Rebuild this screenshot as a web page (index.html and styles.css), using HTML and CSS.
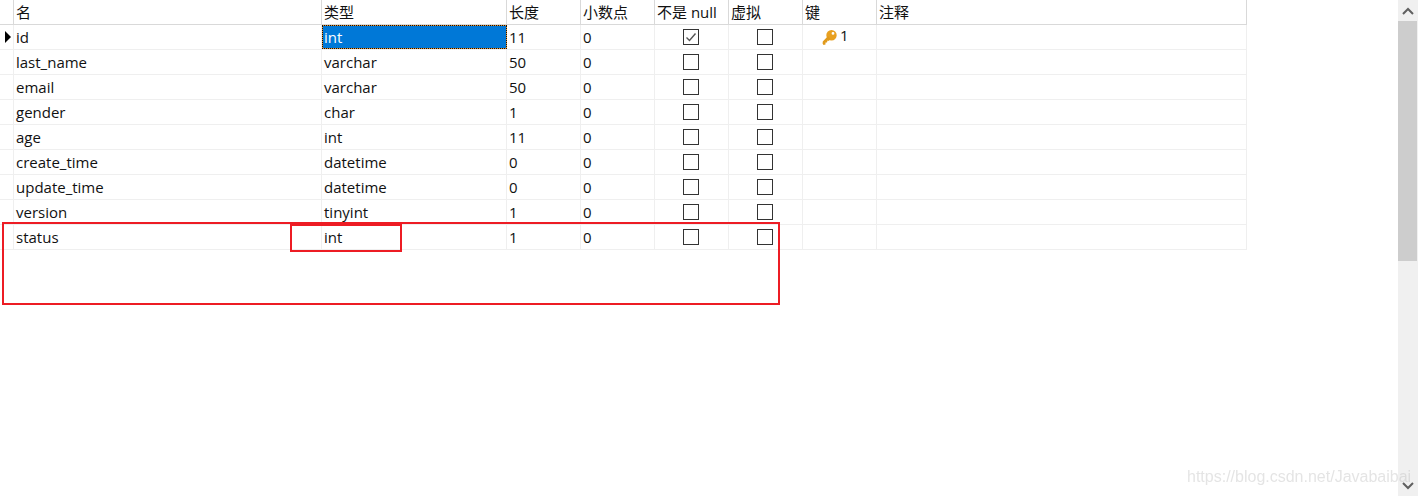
FILE: index.html
```html
<!DOCTYPE html>
<html lang="en">
<head>
    <meta charset="UTF-8">
    <meta name="viewport" content="width=device-width, initial-scale=1.0">
    <title>Fields</title>
    <link rel="stylesheet" href="styles.css">
</head>
<body>
    <div class="grid">
        <div class="row head">
            <div class="cell"></div>
            <div class="cell">名</div>
            <div class="cell">类型</div>
            <div class="cell">长度</div>
            <div class="cell">小数点</div>
            <div class="cell">不是 null</div>
            <div class="cell">虚拟</div>
            <div class="cell">键</div>
            <div class="cell">注释</div>
        </div>

        <div class="row">
            <div class="cell"><span class="marker"></span></div>
            <div class="cell">id</div>
            <div class="cell selected">int</div>
            <div class="cell">11</div>
            <div class="cell">0</div>
            <div class="cell center"><span class="check">
                <svg width="14" height="14" viewBox="0 0 14 14"><path d="M2.5 7.5 L5.5 10.5 L11.5 3.5" fill="none" stroke="#555" stroke-width="1.4"/></svg>
            </span></div>
            <div class="cell center"><span class="check"></span></div>
            <div class="cell key">
                <svg width="16" height="17" viewBox="0 0 16 17">
                    <path d="M9.5 1 a5.2 5.2 0 1 1 0 10.4 a5.2 5.2 0 1 1 0 -10.4 Z M11 3 a1.4 1.4 0 1 0 0 2.8 a1.4 1.4 0 1 0 0 -2.8 Z" fill="#e8a020" fill-rule="evenodd"/>
                    <path d="M6 7 L8.5 10 L6.5 12 L5.5 11.5 L5 13.5 L3.5 13.5 L3.5 15.5 L1.5 16 L0.6 14.6 L0.8 12.4 Z" fill="#e09a1c"/>
                </svg>
                <span class="key-num">1</span>
            </div>
            <div class="cell"></div>
        </div>

        <div class="row">
            <div class="cell"></div>
            <div class="cell">last_name</div>
            <div class="cell">varchar</div>
            <div class="cell">50</div>
            <div class="cell">0</div>
            <div class="cell center"><span class="check"></span></div>
            <div class="cell center"><span class="check"></span></div>
            <div class="cell"></div>
            <div class="cell"></div>
        </div>

        <div class="row">
            <div class="cell"></div>
            <div class="cell">email</div>
            <div class="cell">varchar</div>
            <div class="cell">50</div>
            <div class="cell">0</div>
            <div class="cell center"><span class="check"></span></div>
            <div class="cell center"><span class="check"></span></div>
            <div class="cell"></div>
            <div class="cell"></div>
        </div>

        <div class="row">
            <div class="cell"></div>
            <div class="cell">gender</div>
            <div class="cell">char</div>
            <div class="cell">1</div>
            <div class="cell">0</div>
            <div class="cell center"><span class="check"></span></div>
            <div class="cell center"><span class="check"></span></div>
            <div class="cell"></div>
            <div class="cell"></div>
        </div>

        <div class="row">
            <div class="cell"></div>
            <div class="cell">age</div>
            <div class="cell">int</div>
            <div class="cell">11</div>
            <div class="cell">0</div>
            <div class="cell center"><span class="check"></span></div>
            <div class="cell center"><span class="check"></span></div>
            <div class="cell"></div>
            <div class="cell"></div>
        </div>

        <div class="row">
            <div class="cell"></div>
            <div class="cell">create_time</div>
            <div class="cell">datetime</div>
            <div class="cell">0</div>
            <div class="cell">0</div>
            <div class="cell center"><span class="check"></span></div>
            <div class="cell center"><span class="check"></span></div>
            <div class="cell"></div>
            <div class="cell"></div>
        </div>

        <div class="row">
            <div class="cell"></div>
            <div class="cell">update_time</div>
            <div class="cell">datetime</div>
            <div class="cell">0</div>
            <div class="cell">0</div>
            <div class="cell center"><span class="check"></span></div>
            <div class="cell center"><span class="check"></span></div>
            <div class="cell"></div>
            <div class="cell"></div>
        </div>

        <div class="row">
            <div class="cell"></div>
            <div class="cell">version</div>
            <div class="cell">tinyint</div>
            <div class="cell">1</div>
            <div class="cell">0</div>
            <div class="cell center"><span class="check"></span></div>
            <div class="cell center"><span class="check"></span></div>
            <div class="cell"></div>
            <div class="cell"></div>
        </div>

        <div class="row">
            <div class="cell"></div>
            <div class="cell">status</div>
            <div class="cell">int</div>
            <div class="cell">1</div>
            <div class="cell">0</div>
            <div class="cell center"><span class="check"></span></div>
            <div class="cell center"><span class="check"></span></div>
            <div class="cell"></div>
            <div class="cell"></div>
        </div>
    </div>

    <div class="scrollbar">
        <div class="arrow">
            <svg width="12" height="8" viewBox="0 0 12 8"><path d="M1 7 L6 2 L11 7" fill="none" stroke="#606060" stroke-width="2"/></svg>
        </div>
        <div class="thumb"></div>
        <div class="arrow down">
            <svg width="12" height="8" viewBox="0 0 12 8"><path d="M1 1 L6 6 L11 1" fill="none" stroke="#606060" stroke-width="2"/></svg>
        </div>
    </div>

    <!-- red marks drawn over the screenshot -->
    <div class="mark mark-row"></div>
    <div class="mark mark-type"></div>
    <div class="watermark">https://blog.csdn.net/Javabaibai</div>
</body>
</html>
```

FILE: styles.css
```css
body {
    margin: 0;
    height: 496px;
    display: flex;
    justify-content: space-between;
    overflow: hidden;
    background-color: #fff;
    color: #111;
    font-family: "Open Sans", "Noto Sans CJK SC", sans-serif;
    font-size: 15px;
}

.grid {
    width: 1247px;
}

.row {
    display: grid;
    grid-template-columns: 14px 308px 185px repeat(5, 74px) 370px;
    grid-template-rows: 24px;
    height: 25px;
    box-sizing: border-box;
    border-bottom: 1px solid #efefef;
}

.head {
    border-bottom: 1px solid #d9d9d9;
}

.cell {
    display: flex;
    align-items: center;
    box-sizing: border-box;
    padding-left: 2px;
    border-right: 1px solid #efefef;
    line-height: 24px;
    white-space: nowrap;
}

.head .cell {
    border-right-color: #d9d9d9;
    padding-bottom: 1px;
}

.center {
    justify-content: center;
    padding-left: 0;
    padding-right: 1px;
}

.selected {
    padding-left: 1px;
    border: 1px dotted #111;
    background: linear-gradient(#0078d7, #0078d7) padding-box, #e8912c border-box;
    color: #fff;
}

.marker {
    width: 0;
    height: 0;
    margin-left: 3px;
    border-left: 6px solid #000;
    border-top: 6px solid transparent;
    border-bottom: 6px solid transparent;
}

.check {
    display: flex;
    align-items: center;
    justify-content: center;
    box-sizing: border-box;
    width: 16px;
    height: 16px;
    border: 1px solid #333;
}

.key {
    padding-left: 19px;
}

.key-num {
    margin-left: 2px;
    margin-top: -4px;
}

.scrollbar {
    display: flex;
    flex-direction: column;
    width: 20px;
    background-color: #f0f0f0;
}

.arrow {
    display: flex;
    align-items: center;
    justify-content: center;
    height: 21px;
}

.arrow.down {
    margin-top: auto;
}

.thumb {
    height: 240px;
    margin-right: 1px;
    background-color: #cdcdcd;
}

.mark {
    position: absolute;
    box-sizing: border-box;
    border: 2px solid #ed1c24;
}

.mark-row {
    left: 2px;
    top: 222px;
    width: 778px;
    height: 83px;
}

.mark-type {
    left: 290px;
    top: 224px;
    width: 112px;
    height: 28px;
}

.watermark {
    position: absolute;
    left: 1187px;
    top: 468px;
    color: rgba(190, 190, 190, 0.42);
    font-family: "Liberation Sans", sans-serif;
    font-size: 16px;
    filter: blur(0.6px);
}
```
